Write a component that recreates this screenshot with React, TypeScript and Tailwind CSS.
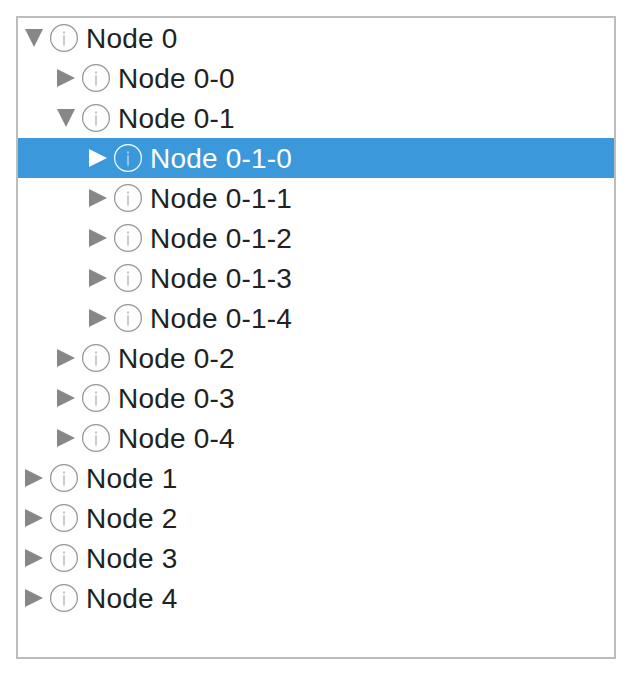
import React from 'react';

interface TreeNode {
  label: string;
  level: 0 | 1 | 2;
  expanded?: boolean;
  selected?: boolean;
}

const nodes: TreeNode[] = [
  { label: 'Node 0', level: 0, expanded: true },
  { label: 'Node 0-0', level: 1 },
  { label: 'Node 0-1', level: 1, expanded: true },
  { label: 'Node 0-1-0', level: 2, selected: true },
  { label: 'Node 0-1-1', level: 2 },
  { label: 'Node 0-1-2', level: 2 },
  { label: 'Node 0-1-3', level: 2 },
  { label: 'Node 0-1-4', level: 2 },
  { label: 'Node 0-2', level: 1 },
  { label: 'Node 0-3', level: 1 },
  { label: 'Node 0-4', level: 1 },
  { label: 'Node 1', level: 0 },
  { label: 'Node 2', level: 0 },
  { label: 'Node 3', level: 0 },
  { label: 'Node 4', level: 0 },
];

const indent = { 0: 'pl-[7px]', 1: 'pl-[39px]', 2: 'pl-[71px]' };

const Arrow = ({ expanded, selected }: { expanded?: boolean; selected?: boolean }) => (
  <svg width="18" height="18" viewBox="0 0 18 18" className={selected ? 'shrink-0 text-white' : 'shrink-0 text-[#878787]'}>
    <path d={expanded ? 'M0 0H18L9 18Z' : 'M0 0L18 9L0 18Z'} fill="currentColor" />
  </svg>
);

const InfoIcon = ({ selected }: { selected?: boolean }) => (
  <svg width="28" height="28" viewBox="0 0 28 28" fill="none" className="ml-[7px] shrink-0">
    <circle cx="14" cy="14" r="13.4" stroke={selected ? '#ffffff' : '#8f9696'} strokeWidth="1.2" />
    <rect x="13.4" y="7.5" width="1.2" height="2.2" fill={selected ? '#d5e8f7' : '#a8a8a8'} />
    <rect x="13.4" y="11.5" width="1.2" height="10" fill={selected ? '#d5e8f7' : '#a8a8a8'} />
  </svg>
);

export default function App() {
  return (
    <div className="h-[676px] w-[632px] bg-white p-4 font-['Liberation_Sans',Arial,sans-serif]">
      <div className="h-[643px] w-[600px] border-2 border-[#bdbdbd]">
        {nodes.map(node => (
          <div
            key={node.label}
            className={`flex h-10 items-center ${indent[node.level]} ${node.selected ? 'bg-[#3b99db] text-white' : 'text-[#222222]'}`}
          >
            <Arrow expanded={node.expanded} selected={node.selected} />
            <InfoIcon selected={node.selected} />
            <span className="ml-[8px] pt-0.5 text-[28px] leading-10 tracking-[0.2px]">{node.label}</span>
          </div>
        ))}
      </div>
    </div>
  );
}
